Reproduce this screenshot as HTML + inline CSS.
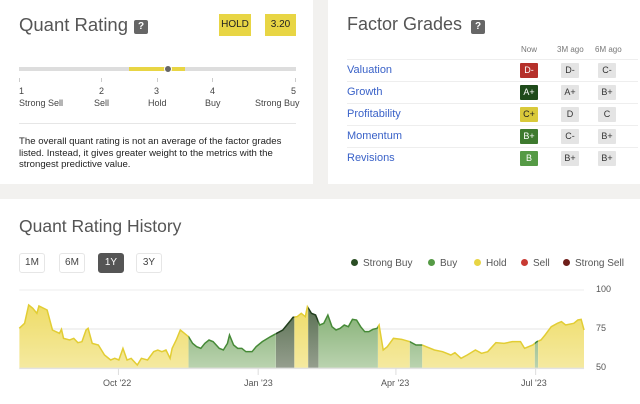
<!DOCTYPE html><html><head><style>
*{margin:0;padding:0;box-sizing:border-box}
body{width:640px;height:404px;background:#f2f1ef;font-family:"Liberation Sans",sans-serif;position:relative;overflow:hidden;color:#333}
.a{position:absolute;white-space:nowrap}
.card{position:absolute;background:#fff}
.q{width:14px;height:14px;background:#666;color:#fff;font-size:10px;font-weight:bold;text-align:center;line-height:14px;border-radius:2px}
.yb{background:#e8d544;font-size:10px;text-align:center;line-height:21px;color:#222}
.g{width:18px;height:15px;font-size:9px;text-align:center;line-height:15px;border-radius:1px}
.gr{background:#e4e4e4;color:#333}
.fl{font-size:11px;color:#3a62c8}
.hl{position:absolute;left:347px;width:291px;height:1px;background:#eee}
.btn{position:absolute;top:253px;width:26px;height:20px;border:1px solid #e6e6e6;border-radius:3px;font-size:10px;text-align:center;line-height:18px;color:#444}
.lg{position:absolute;top:258px;font-size:10px;color:#555}
.lg i{display:inline-block;width:7px;height:7px;border-radius:50%;margin-right:5px;vertical-align:0}
</style></head><body>
<div class="card" style="left:0;top:0;width:313px;height:184px"></div>
<div class="card" style="left:328px;top:0;width:312px;height:184px"></div>
<div class="card" style="left:0;top:199px;width:640px;height:205px"></div>

<div class="a" style="left:19px;top:14px;font-size:18.5px;color:#555">Quant Rating</div>
<div class="a q" style="left:134px;top:20px">?</div>
<div class="a yb" style="left:219px;top:14px;width:32px;height:22px">HOLD</div>
<div class="a yb" style="left:265px;top:14px;width:31px;height:22px">3.20</div>
<div class="a" style="left:19px;top:67px;width:277px;height:4px;background:#ddd"></div>
<div class="a" style="left:129px;top:67px;width:56px;height:4px;background:#e8d544"></div>
<div class="a" style="left:164px;top:65px;width:8px;height:8px;border-radius:50%;background:#666;border:1px solid #fff"></div>
<div class="a" style="left:19px;top:78px;width:1px;height:4px;background:#ccc"></div>
<div class="a" style="left:101px;top:78px;width:1px;height:4px;background:#ccc"></div>
<div class="a" style="left:157px;top:78px;width:1px;height:4px;background:#ccc"></div>
<div class="a" style="left:212px;top:78px;width:1px;height:4px;background:#ccc"></div>
<div class="a" style="left:295px;top:78px;width:1px;height:4px;background:#ccc"></div>
<div class="a" style="left:19px;top:86px;font-size:9px;color:#444">1</div>
<div class="a" style="left:99px;top:86px;font-size:9px;color:#444">2</div>
<div class="a" style="left:154px;top:86px;font-size:9px;color:#444">3</div>
<div class="a" style="left:210px;top:86px;font-size:9px;color:#444">4</div>
<div class="a" style="left:291px;top:86px;font-size:9px;color:#444">5</div>
<div class="a" style="left:19px;top:98px;font-size:9px;color:#444">Strong Sell</div>
<div class="a" style="left:94px;top:98px;font-size:9px;color:#444">Sell</div>
<div class="a" style="left:148px;top:98px;font-size:9px;color:#444">Hold</div>
<div class="a" style="left:205px;top:98px;font-size:9px;color:#444">Buy</div>
<div class="a" style="left:255px;top:98px;font-size:9px;color:#444">Strong Buy</div>
<div class="a" style="left:19px;top:123px;width:277px;height:1px;background:#e6e6e6"></div>
<div class="a" style="left:19px;top:136px;font-size:9.6px;line-height:11.5px;color:#222;white-space:normal;width:290px">The overall quant rating is not an average of the factor grades listed. Instead, it gives greater weight to the metrics with the strongest predictive value.</div>

<div class="a" style="left:347px;top:14px;font-size:18px;color:#555">Factor Grades</div>
<div class="a q" style="left:471px;top:20px">?</div>
<div class="a" style="left:521px;top:45px;font-size:8px;color:#777">Now</div>
<div class="a" style="left:557px;top:45px;font-size:8px;color:#777">3M ago</div>
<div class="a" style="left:595px;top:45px;font-size:8px;color:#777">6M ago</div>
<div class="hl" style="top:59px"></div><div class="hl" style="top:81px"></div><div class="hl" style="top:103px"></div><div class="hl" style="top:125px"></div><div class="hl" style="top:147px"></div>
<div class="a fl" style="left:347px;top:64px">Valuation</div>
<div class="a fl" style="left:347px;top:86px">Growth</div>
<div class="a fl" style="left:347px;top:108px">Profitability</div>
<div class="a fl" style="left:347px;top:130px">Momentum</div>
<div class="a fl" style="left:347px;top:152px">Revisions</div>
<div class="a g" style="left:520px;top:63px;background:#b5302a;color:#fff">D-</div>
<div class="a g" style="left:520px;top:85px;background:#1e4a1a;color:#fff">A+</div>
<div class="a g" style="left:520px;top:107px;background:#d9c93a;color:#222">C+</div>
<div class="a g" style="left:520px;top:129px;background:#3e7a2e;color:#fff">B+</div>
<div class="a g" style="left:520px;top:151px;background:#559a45;color:#fff">B</div>
<div class="a g gr" style="left:561px;top:63px">D-</div><div class="a g gr" style="left:598px;top:63px">C-</div>
<div class="a g gr" style="left:561px;top:85px">A+</div><div class="a g gr" style="left:598px;top:85px">B+</div>
<div class="a g gr" style="left:561px;top:107px">D</div><div class="a g gr" style="left:598px;top:107px">C</div>
<div class="a g gr" style="left:561px;top:129px">C-</div><div class="a g gr" style="left:598px;top:129px">B+</div>
<div class="a g gr" style="left:561px;top:151px">B+</div><div class="a g gr" style="left:598px;top:151px">B+</div>

<div class="a" style="left:19px;top:216px;font-size:17.5px;color:#555">Quant Rating History</div>
<div class="btn" style="left:19px">1M</div>
<div class="btn" style="left:59px">6M</div>
<div class="btn" style="left:98px;background:#555;color:#fff;border-color:#555">1Y</div>
<div class="btn" style="left:136px">3Y</div>
<div class="lg" style="left:351px"><i style="background:#2a4d24"></i>Strong Buy</div>
<div class="lg" style="left:428px"><i style="background:#559a45"></i>Buy</div>
<div class="lg" style="left:474px"><i style="background:#e8d544"></i>Hold</div>
<div class="lg" style="left:521px"><i style="background:#c83a33"></i>Sell</div>
<div class="lg" style="left:563px"><i style="background:#6e1e1a"></i>Strong Sell</div>

<svg class="a" style="left:0;top:280px" width="640" height="124" viewBox="0 0 1561.6 372" preserveAspectRatio="none">
<defs>
<linearGradient id="gy" x1="0" y1="0" x2="0" y2="1"><stop offset="0" stop-color="#ecd752"/><stop offset="1" stop-color="#f8f1c0"/></linearGradient>
<linearGradient id="gg" x1="0" y1="0" x2="0" y2="1"><stop offset="0" stop-color="#6a9f58"/><stop offset="1" stop-color="#dbe8d3"/></linearGradient>
<linearGradient id="gd" x1="0" y1="0" x2="0" y2="1"><stop offset="0" stop-color="#3f5d38"/><stop offset="1" stop-color="#b9b9b2"/></linearGradient>
<clipPath id="ar"><path d="M47,265 L47,145 L60,130 L70,75 L80,85 L90,100 L95,78 L115,90 L128,150 L145,160 L150,148 L155,175 L170,180 L180,175 L190,188 L200,185 L210,150 L215,145 L225,190 L240,195 L255,225 L270,240 L280,235 L290,240 L300,205 L310,240 L320,235 L335,255 L345,235 L360,240 L375,215 L385,210 L395,215 L405,210 L415,235 L420,205 L430,180 L440,150 L450,160 L460,170 L470,190 L480,200 L490,205 L500,190 L510,180 L520,185 L535,205 L545,210 L555,190 L560,165 L570,195 L580,205 L590,205 L600,215 L615,215 L625,200 L640,185 L660,170 L675,160 L690,150 L700,135 L710,120 L715,112 L725,110 L735,100 L745,110 L750,80 L760,100 L770,105 L780,135 L790,130 L800,105 L810,140 L820,150 L830,145 L840,135 L850,140 L860,118 L870,120 L880,140 L890,155 L900,155 L910,148 L920,145 L925,135 L935,210 L945,200 L960,175 L980,178 L1000,185 L1015,195 L1030,195 L1040,200 L1060,210 L1080,215 L1100,225 L1110,218 L1125,235 L1140,225 L1160,210 L1175,220 L1190,215 L1210,188 L1230,190 L1250,185 L1270,185 L1280,205 L1300,195 L1310,185 L1320,180 L1330,165 L1345,140 L1360,130 L1370,125 L1380,135 L1400,130 L1410,120 L1418,118 L1425,150 L1425,265 Z"/></clipPath>
<clipPath id="cy"><rect x="0" y="0" width="460" height="372"/><rect x="718" y="0" width="34" height="372"/><rect x="922" y="0" width="78" height="372"/><rect x="1030" y="0" width="275" height="372"/><rect x="1313" y="0" width="200" height="372"/></clipPath>
<clipPath id="cg"><rect x="460" y="0" width="213" height="372"/><rect x="777" y="0" width="145" height="372"/><rect x="1000" y="0" width="30" height="372"/><rect x="1305" y="0" width="8" height="372"/></clipPath>
<clipPath id="cd"><rect x="673" y="0" width="45" height="372"/><rect x="752" y="0" width="25" height="372"/></clipPath>
</defs>
<line x1="47" y1="30" x2="1425" y2="30" stroke="#eee" stroke-width="1" vector-effect="non-scaling-stroke"/>
<line x1="47" y1="147" x2="1425" y2="147" stroke="#eee" stroke-width="1.5" vector-effect="non-scaling-stroke"/>
<g clip-path="url(#ar)"><rect x="0" y="0" width="1561" height="372" fill="url(#gy)" clip-path="url(#cy)"/><rect x="0" y="0" width="1561" height="372" fill="url(#gg)" clip-path="url(#cg)"/><rect x="0" y="0" width="1561" height="372" fill="url(#gd)" clip-path="url(#cd)"/></g>
<g clip-path="url(#cy)"><path fill="none" stroke="#e2cd34" stroke-width="1.5" vector-effect="non-scaling-stroke" d="M47,145 L60,130 L70,75 L80,85 L90,100 L95,78 L115,90 L128,150 L145,160 L150,148 L155,175 L170,180 L180,175 L190,188 L200,185 L210,150 L215,145 L225,190 L240,195 L255,225 L270,240 L280,235 L290,240 L300,205 L310,240 L320,235 L335,255 L345,235 L360,240 L375,215 L385,210 L395,215 L405,210 L415,235 L420,205 L430,180 L440,150 L450,160 L460,170 L470,190 L480,200 L490,205 L500,190 L510,180 L520,185 L535,205 L545,210 L555,190 L560,165 L570,195 L580,205 L590,205 L600,215 L615,215 L625,200 L640,185 L660,170 L675,160 L690,150 L700,135 L710,120 L715,112 L725,110 L735,100 L745,110 L750,80 L760,100 L770,105 L780,135 L790,130 L800,105 L810,140 L820,150 L830,145 L840,135 L850,140 L860,118 L870,120 L880,140 L890,155 L900,155 L910,148 L920,145 L925,135 L935,210 L945,200 L960,175 L980,178 L1000,185 L1015,195 L1030,195 L1040,200 L1060,210 L1080,215 L1100,225 L1110,218 L1125,235 L1140,225 L1160,210 L1175,220 L1190,215 L1210,188 L1230,190 L1250,185 L1270,185 L1280,205 L1300,195 L1310,185 L1320,180 L1330,165 L1345,140 L1360,130 L1370,125 L1380,135 L1400,130 L1410,120 L1418,118 L1425,150"/></g>
<g clip-path="url(#cg)"><path fill="none" stroke="#468a37" stroke-width="1.5" vector-effect="non-scaling-stroke" d="M440,150 L450,160 L460,170 L470,190 L480,200 L490,205 L500,190 L510,180 L520,185 L535,205 L545,210 L555,190 L560,165 L570,195 L580,205 L590,205 L600,215 L615,215 L625,200 L640,185 L660,170 L675,160 L690,150 L700,135 L710,120 L715,112 L725,110 L735,100 L745,110 L750,80 L760,100 L770,105 L780,135 L790,130 L800,105 L810,140 L820,150 L830,145 L840,135 L850,140 L860,118 L870,120 L880,140 L890,155 L900,155 L910,148 L920,145 L925,135 L935,210 L945,200 L960,175 L980,178 L1000,185 L1015,195 L1030,195 L1040,200 M1300,195 L1310,185 L1320,180"/></g>
<g clip-path="url(#cd)"><path fill="none" stroke="#223f1e" stroke-width="1.5" vector-effect="non-scaling-stroke" d="M660,170 L675,160 L690,150 L700,135 L710,120 L715,112 L725,110 L735,100 L745,110 L750,80 L760,100 L770,105 L780,135"/></g>
<line x1="47" y1="265" x2="1425" y2="265" stroke="#e2e2e2" stroke-width="1.5" vector-effect="non-scaling-stroke"/>
<g stroke="#ddd"><line x1="289" y1="265" x2="289" y2="285" vector-effect="non-scaling-stroke"/><line x1="630" y1="265" x2="630" y2="285" vector-effect="non-scaling-stroke"/><line x1="966" y1="265" x2="966" y2="285" vector-effect="non-scaling-stroke"/><line x1="1307" y1="265" x2="1307" y2="285" vector-effect="non-scaling-stroke"/></g>
</svg>
<div class="a" style="left:596px;top:284px;font-size:9px;color:#555">100</div>
<div class="a" style="left:596px;top:323px;font-size:9px;color:#555">75</div>
<div class="a" style="left:596px;top:362px;font-size:9px;color:#555">50</div>
<div class="a" style="left:103px;top:378px;font-size:9px;color:#555">Oct '22</div>
<div class="a" style="left:244px;top:378px;font-size:9px;color:#555">Jan '23</div>
<div class="a" style="left:381px;top:378px;font-size:9px;color:#555">Apr '23</div>
<div class="a" style="left:521px;top:378px;font-size:9px;color:#555">Jul '23</div>
</body></html>
